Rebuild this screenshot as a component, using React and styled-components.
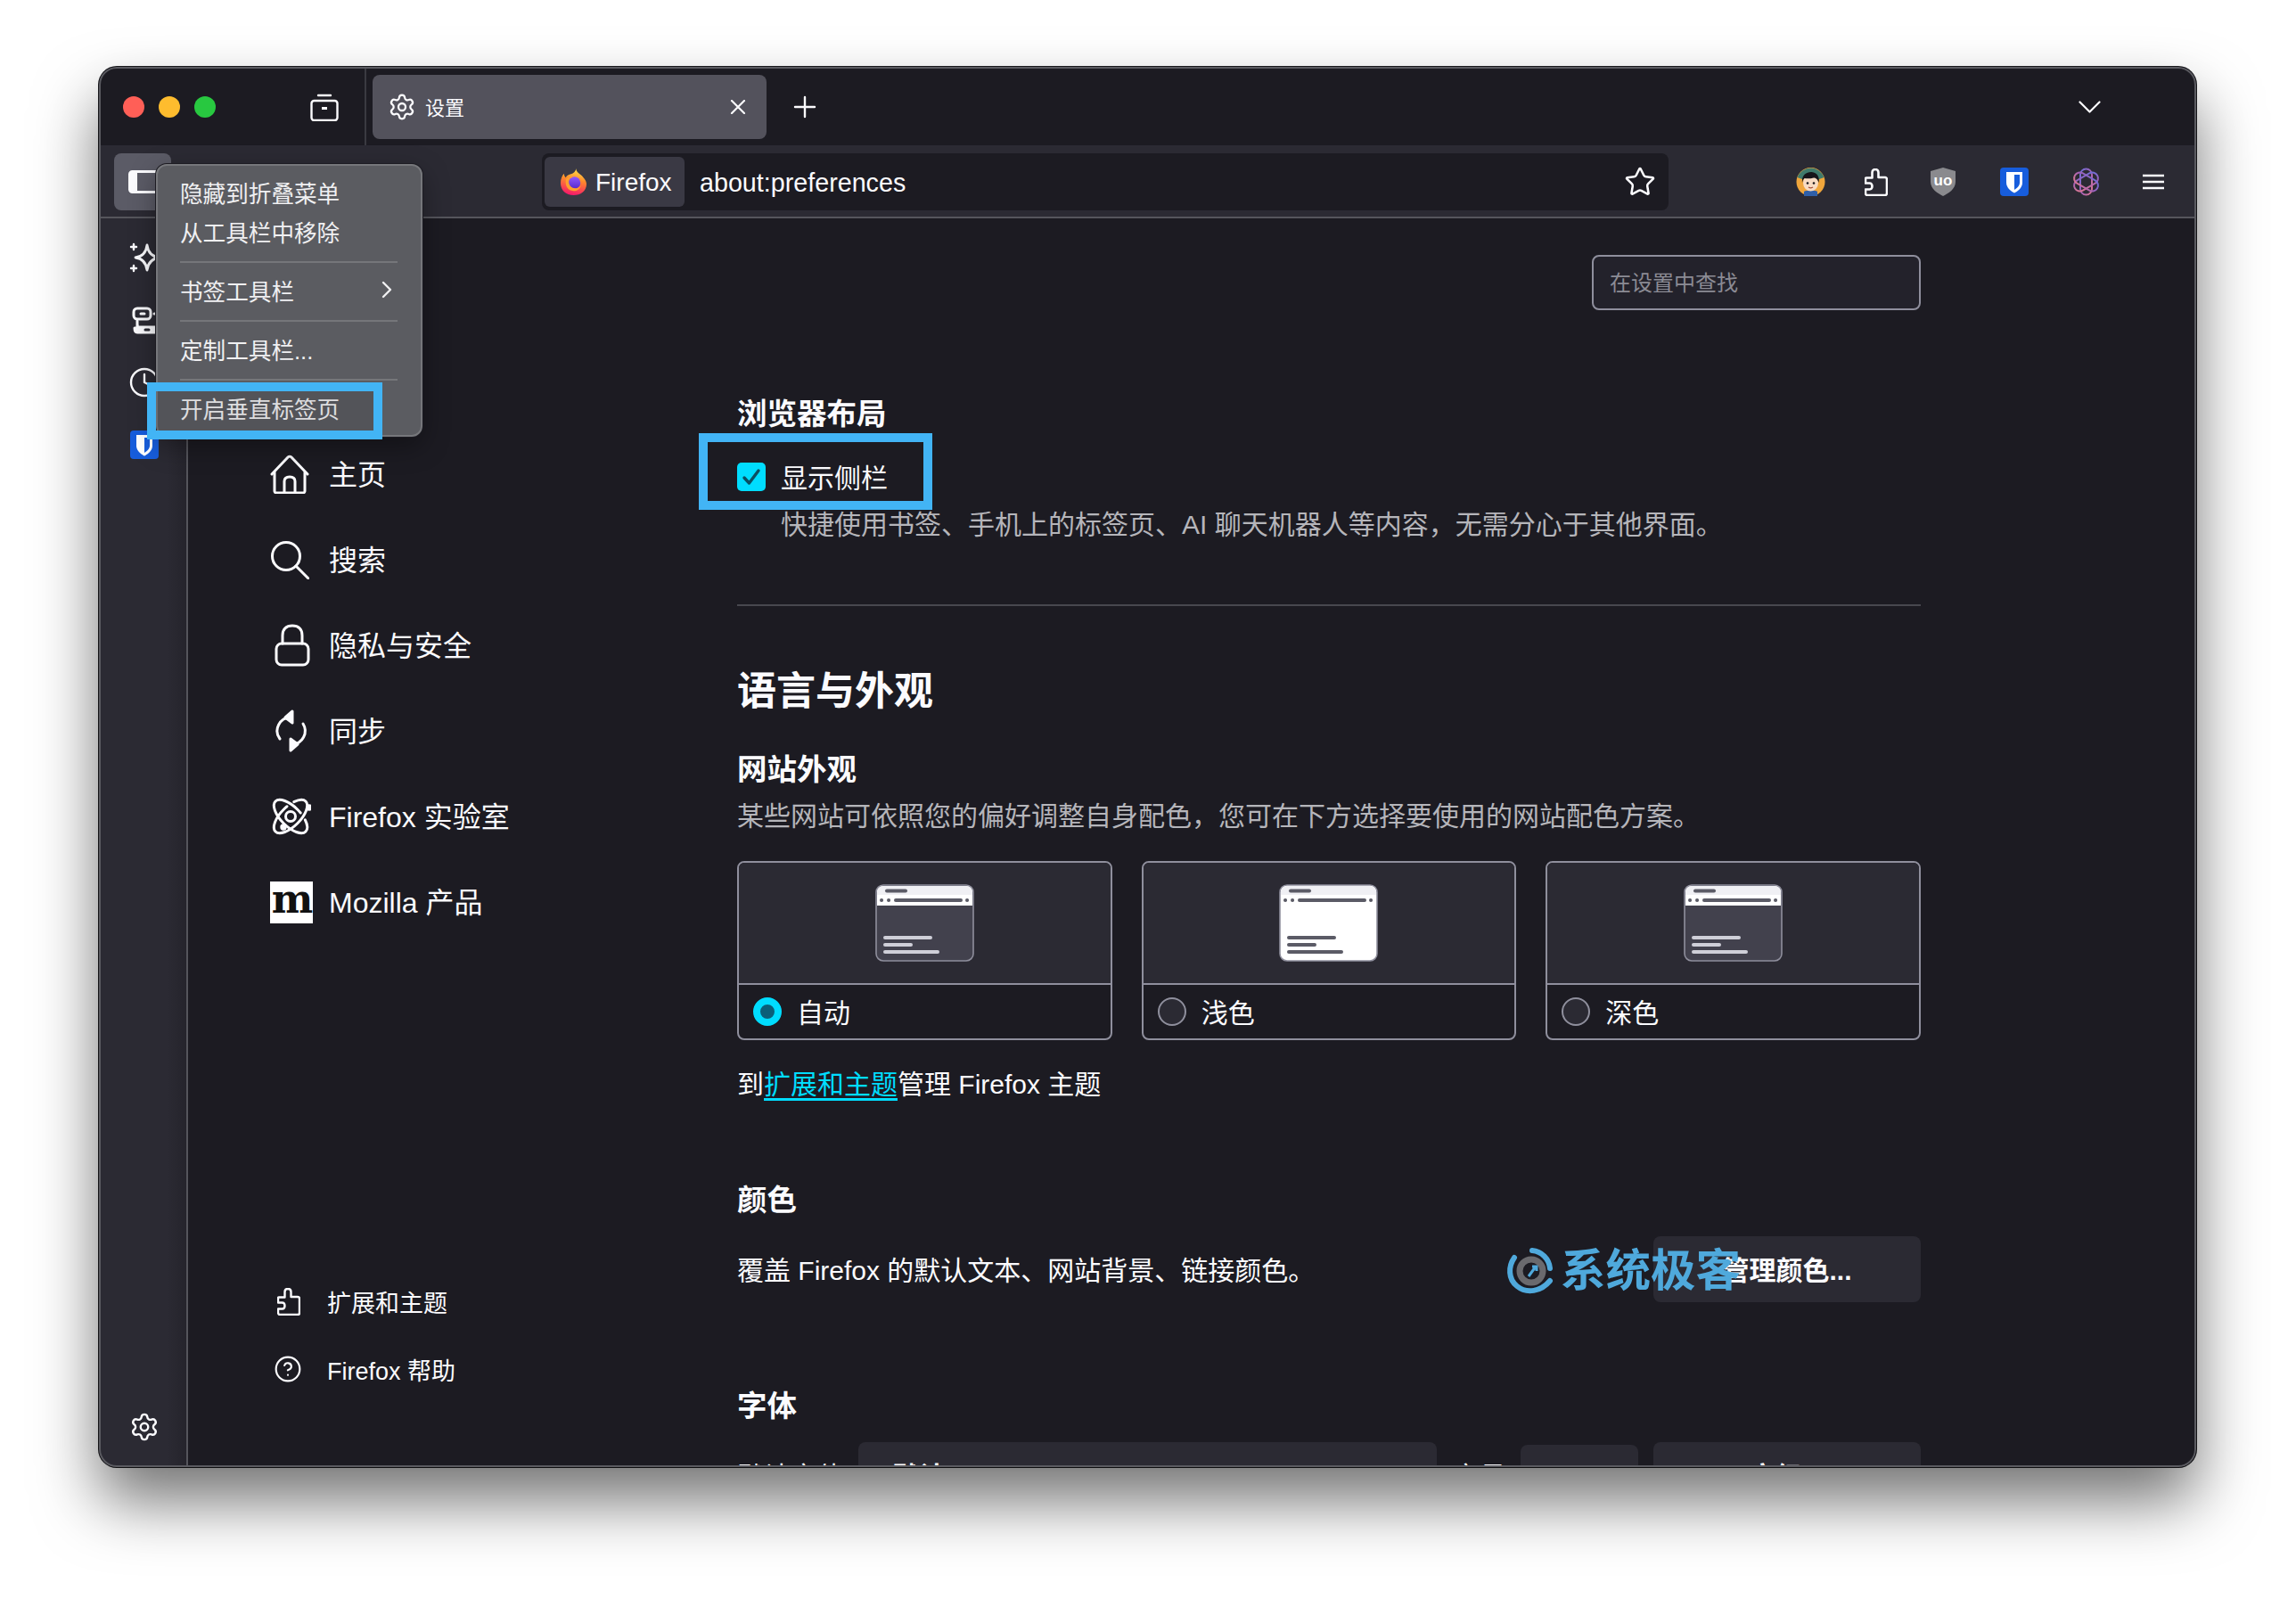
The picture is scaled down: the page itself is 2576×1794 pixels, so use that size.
import React from "react";
import styled, { createGlobalStyle } from "styled-components";
import { Settings, Star, Clock, CircleHelp, ChevronRight } from "lucide-react";

const GlobalStyle = createGlobalStyle`
  * { box-sizing: border-box; }
  html, body { margin: 0; background: #fff; }
  body {
    font-family: "Liberation Sans", "Noto Sans CJK SC", sans-serif;
    color: #fbfbfe;
  }
`;

const Page = styled.div`
  width: 2576px;
  height: 1794px;
  padding: 75px 0 0 111px;
  overflow: hidden;
  background: #fff;
`;

const Window = styled.div`
  position: relative;
  width: 2353px;
  height: 1571px;
  display: flex;
  flex-direction: column;
  overflow: hidden;
  background: #1c1b22;
  border-radius: 20px;
  box-shadow: 0 38px 70px rgba(0, 0, 0, 0.55), 0 0 0 1px #1a1a1e;
  &::after {
    content: "";
    position: absolute;
    inset: 0;
    border-radius: 20px;
    border: 2px solid #5a5a60;
    pointer-events: none;
    z-index: 5;
  }
`;

/* title bar */
const TitleBar = styled.div`
  height: 88px;
  flex: none;
  padding-top: 2px;
  display: flex;
  align-items: center;
  background: #1c1b22;
`;

const TrafficLights = styled.div`
  display: flex;
  gap: 16px;
  padding-left: 27px;
`;

const Dot = styled.span`
  width: 24px;
  height: 24px;
  border-radius: 50%;
  background: ${({ $color }) => $color};
`;

const TabsToggle = styled.svg`
  width: 32px;
  height: 31px;
  margin-left: 106px;
`;

const TabDivider = styled.div`
  align-self: stretch;
  width: 2px;
  margin: -2px 0 0 29px;
  background: #3a3a41;
`;

const Tab = styled.div`
  width: 442px;
  height: 72px;
  margin-left: 7px;
  padding: 0 23px 0 17px;
  display: flex;
  align-items: center;
  gap: 10px;
  border-radius: 8px;
  background: #53525c;
  font-size: 22px;
`;

const TabTitle = styled.span`
  flex: 1;
  padding-top: 3px;
  line-height: 32px;
`;

const NewTab = styled.svg`
  width: 26px;
  height: 26px;
  margin-left: 30px;
`;

const AllTabs = styled.svg`
  width: 25px;
  height: 14px;
  margin-left: auto;
  margin-right: 107px;
`;

/* toolbar */
const Toolbar = styled.div`
  height: 82px;
  flex: none;
  padding-top: 2px;
  display: flex;
  align-items: center;
  background: #2b2a33;
  border-bottom: 2px solid #55555c;
`;

const SidebarToggle = styled.button`
  width: 64px;
  height: 64px;
  margin-left: 17px;
  padding: 0 0 0 16px;
  display: flex;
  align-items: center;
  border: 0;
  border-radius: 8px;
  background: #5b5b66;
`;

const UrlBar = styled.div`
  width: 1264px;
  height: 64px;
  margin-left: 416px;
  padding: 0 14px 0 3px;
  display: flex;
  align-items: center;
  border-radius: 8px;
  background: #1c1b22;
  font-size: 28.7px;
`;

const IdentityChip = styled.div`
  width: 157px;
  height: 56px;
  padding-left: 17px;
  display: flex;
  align-items: center;
  gap: 9px;
  border-radius: 6px;
  background: #3a3944;
  font-size: 28px;
`;

const ChipLabel = styled.span`
  padding-top: 2px;
`;

const UrlText = styled.span`
  flex: 1;
  margin-left: 17px;
  padding-top: 3px;
`;

const ExtSlot = styled.div`
  margin-left: ${({ $ml }) => $ml}px;
  display: flex;
  align-items: center;
`;

/* body */
const Main = styled.div`
  flex: 1;
  min-height: 0;
  display: flex;
`;

const Sidebar = styled.aside`
  width: 100px;
  flex: none;
  padding: 9px 0 28px 3px;
  display: flex;
  flex-direction: column;
  align-items: center;
  background: linear-gradient(to right, #2b2a33 78%, #25242c 100%);
  border-right: 2px solid #55555c;
`;

const SideIcon = styled.div`
  height: 70px;
  width: 40px;
  display: flex;
  align-items: center;
  justify-content: center;
`;

const SideFooter = styled.div`
  margin-top: auto;
  display: flex;
`;

const PrefNav = styled.nav`
  width: 616px;
  flex: none;
  padding: 238px 0 72px 92px;
  display: flex;
  flex-direction: column;
  justify-content: space-between;
`;

const NavGroup = styled.div`
  display: flex;
  flex-direction: column;
`;

const NavItem = styled.div`
  height: 96px;
  padding-bottom: 3px;
  display: flex;
  align-items: center;
  font-size: 32px;
`;

const NavIcon = styled.span`
  width: 66px;
  flex: none;
  display: flex;
  align-items: center;
  padding-top: 5px;
`;

const FooterItem = styled.div`
  height: 76px;
  display: flex;
  align-items: center;
  font-size: 27px;
`;

const FooterIcon = styled.span`
  width: 64px;
  padding-left: ${({ $pad }) => $pad}px;
  flex: none;
  display: flex;
  align-items: center;
`;

const MozillaMark = styled.span`
  width: 48px;
  height: 47px;
  display: flex;
  align-items: center;
  justify-content: center;
  background: #fff;
  color: #111;
  font-family: "DejaVu Serif", serif;
  font-weight: 700;
  font-size: 44px;
  line-height: 47px;
  padding-bottom: 8px;
  letter-spacing: -2px;
`;

const Content = styled.main`
  width: 1328px;
  flex: none;
  display: flex;
  flex-direction: column;
  align-items: stretch;
  & > * {
    flex: none;
  }
`;

const SearchBox = styled.div`
  width: 369px;
  height: 62px;
  margin: 41px 0 0 auto;
  padding: 0 0 3px 18px;
  display: flex;
  align-items: center;
  border: 2px solid #8f8f9d;
  border-radius: 8px;
  background: #23222b;
  color: #8b8b94;
  font-size: 24px;
`;

const Heading = styled.h3`
  margin: ${({ $top }) => $top}px 0 0;
  font-size: 33.5px;
  line-height: 40px;
  font-weight: 700;
`;

const PageHeading = styled.h2`
  margin: 66px 0 0;
  font-size: 44px;
  line-height: 60px;
  font-weight: 700;
`;

const CheckRow = styled.label`
  position: relative;
  width: max-content;
  height: 32px;
  margin-top: 34px;
  display: flex;
  align-items: center;
  gap: 17px;
  font-size: 30px;
`;

const CheckLabel = styled.span`
  padding-bottom: 3px;
`;

const CheckBox = styled.span`
  width: 32px;
  height: 32px;
  display: flex;
  align-items: center;
  justify-content: center;
  border-radius: 5px;
  background: #00ddff;
`;

const Highlight = styled.span`
  position: absolute;
  left: ${({ $left }) => $left}px;
  top: ${({ $top }) => $top}px;
  width: ${({ $w }) => $w}px;
  height: ${({ $h }) => $h}px;
  border: 10px solid #42b4f5;
  background: ${({ $fill }) => $fill || "transparent"};
  pointer-events: none;
`;

const Note = styled.p`
  margin: ${({ $top }) => $top}px 0 0 ${({ $left }) => $left || 0}px;
  font-size: 30px;
  line-height: 40px;
  color: #b5b5ba;
`;

const Rule = styled.hr`
  height: 2px;
  margin: 69px 0 0;
  border: 0;
  background: #48484f;
`;

const CardRow = styled.div`
  margin-top: 30px;
  display: grid;
  grid-template-columns: repeat(3, 1fr);
  column-gap: 33px;
`;

const ThemeCard = styled.div`
  height: 201px;
  display: flex;
  flex-direction: column;
  border: 2px solid #8f8f9d;
  border-radius: 8px;
  overflow: hidden;
`;

const ThemePreview = styled.div`
  height: 137px;
  flex: none;
  padding-top: 24px;
  display: flex;
  justify-content: center;
  background: #2b2a33;
  border-bottom: 2px solid #8f8f9d;
`;

const ThemeLabel = styled.div`
  flex: 1;
  padding-left: 16px;
  display: flex;
  align-items: center;
  gap: 17px;
  font-size: 30px;
`;

const ThemeName = styled.span`
  padding-bottom: 3px;
`;

const Radio = styled.span`
  width: 32px;
  height: 32px;
  border-radius: 50%;
  background: ${({ $on }) => ($on ? "#0b5f78" : "#2b2a33")};
  border: ${({ $on }) => ($on ? "8px solid #00ddff" : "2px solid #8f8f9d")};
`;

const LinkLine = styled.p`
  margin: 30px 0 0;
  font-size: 30px;
  line-height: 40px;
`;

const ThemeLink = styled.a`
  color: #00ddff;
  text-decoration: underline;
  text-underline-offset: 5px;
`;

const ControlRow = styled.div`
  position: relative;
  height: 74px;
  margin-top: ${({ $top }) => $top}px;
  display: flex;
  align-items: center;
  font-size: 30px;
`;

const RowText = styled.span`
  flex: ${({ $grow }) => ($grow ? 1 : "none")};
  margin-left: ${({ $ml }) => $ml || 0}px;
  padding-bottom: 3px;
`;

const PlainButton = styled.div`
  width: 300px;
  height: 74px;
  flex: none;
  margin-left: ${({ $ml }) => $ml || 0}px;
  padding-bottom: 3px;
  display: flex;
  align-items: center;
  justify-content: center;
  border-radius: 8px;
  background: #2b2a33;
  font-weight: 600;
`;

const Dropdown = styled.div`
  width: ${({ $w }) => $w}px;
  height: ${({ $h }) => $h}px;
  flex: none;
  margin-left: ${({ $ml }) => $ml}px;
  padding: 0 0 3px ${({ $pad }) => $pad}px;
  display: flex;
  align-items: center;
  border-radius: 8px;
  background: #2b2a33;
  font-weight: 600;
`;

const Watermark = styled.div`
  position: absolute;
  left: 862px;
  top: 9px;
  display: flex;
  align-items: center;
  gap: 2px;
  color: #4fa9dc;
  font-size: 50.5px;
  font-weight: 700;
  line-height: 60px;
`;

/* popup menu */
const ContextMenu = styled.div`
  position: absolute;
  left: 64px;
  top: 109px;
  width: 299px;
  height: 306px;
  padding: 7px 0 9px;
  display: flex;
  flex-direction: column;
  border: 2px solid #76777b;
  border-radius: 12px;
  background: #5b5c61;
  box-shadow: 0 0 0 1px #1c1b22, 0 10px 30px rgba(0, 0, 0, 0.35);
  color: #f0f0f2;
  font-size: 25.6px;
  z-index: 4;
`;

const MenuItem = styled.div`
  position: relative;
  height: 44px;
  flex: none;
  padding: 0 22px 0 25px;
  display: flex;
  align-items: center;
  justify-content: space-between;
`;

const MenuRule = styled.div`
  height: 2px;
  flex: none;
  margin: 12px 26px 8px 25px;
  background: #75767a;
`;

const Icon = ({ children, w = 32, h = 32, box, ...rest }) => (
  <svg width={w} height={h} viewBox={box || `0 0 ${w} ${h}`} fill="none" stroke="#fbfbfe" strokeLinecap="round" strokeLinejoin="round" {...rest}>
    {children}
  </svg>
);

const PuzzleIcon = ({ w = 26, h = 31, sw = 2.6 }) => (
  <Icon w={w} h={h} box="0 0 26 31" strokeWidth={sw}>
    <path d="M2 10.5H8.5V4.5C8.5 2.5 10 1 12 1C14 1 15.5 2.5 15.5 4.5V10H23C24 10 25 11 25 12V28C25 29 24 30 23 30H3C2 30 1 29 1 28V23.5H5.5C7.5 23.5 8.5 22 8.5 20C8.5 18 7.5 16.5 5.5 16.5H1V11.5C1 11 1.5 10.5 2 10.5Z" />
  </Icon>
);

const BitwardenIcon = () => (
  <svg width="32" height="32" viewBox="0 0 32 32">
    <rect width="32" height="32" rx="4" fill="#175ddc" />
    <path d="M7 5H25V17C25 23 19 27 16 28.5C13 27 7 23 7 17Z" fill="#fff" />
    <path d="M16 8H22V17C22 20.5 18.5 23.5 16 25Z" fill="#175ddc" />
  </svg>
);

const FirefoxLogo = () => (
  <svg width="31" height="33" viewBox="0 0 32 32" style={{ flex: "none" }}>
    <defs>
      <linearGradient id="fxBody" x1="0.6" y1="0" x2="0.4" y2="1">
        <stop offset="0" stopColor="#ffe14d" />
        <stop offset="0.42" stopColor="#ff8a2b" />
        <stop offset="1" stopColor="#f5156c" />
      </linearGradient>
      <linearGradient id="fxGlobe" x1="0.5" y1="0" x2="0.5" y2="1">
        <stop offset="0" stopColor="#9059ff" />
        <stop offset="1" stopColor="#592acb" />
      </linearGradient>
    </defs>
    <path d="M19 0C19 5 24 6 27 10C30 13 31 16 31 18C31 26 24 31 16 31C7 31 1 25 1 17C1 12 3 8 5 6C5 8 6 10 7 10.500C8 8 11 7 13 6.500C15 6 18.500 4 19 0Z" fill="url(#fxBody)" />
    <circle cx="17" cy="16.500" r="7" fill="url(#fxGlobe)" />
    <path d="M7 13C9 10 12 9.500 15 10.500C12 10.500 10.500 12.500 10.500 15C10.500 20 14 23 18 23C21 23 23 21.500 24.500 19.500C23.500 24 20 26 16 26C10 26 6 21 7 13Z" fill="#ffa02e" />
  </svg>
);

const AvatarIcon = () => (
  <svg width="33" height="32" viewBox="0 0 33 32">
    <circle cx="16.5" cy="16" r="16" fill="#f0a63c" />
    <path d="M1.5 11A16 16 0 0 1 31.500 11L26 13H7Z" fill="#3f7a6b" />
    <path d="M9 32V27C11 25 22 25 24 27V32Z" fill="#2f5fa8" />
    <ellipse cx="16.500" cy="17" rx="8.500" ry="9.500" fill="#f8dcc3" />
    <path d="M7 17C6 9 11 5 17 5C23 5 27 10 25.500 17C24.500 13 22 11.500 20 11.500C17 12.500 12 12.500 9.500 12C8 13 7.500 15 7 17Z" fill="#17161a" />
    <circle cx="13" cy="17.500" r="1.300" fill="#17161a" />
    <circle cx="20" cy="17.500" r="1.300" fill="#17161a" />
    <path d="M14 22C15.500 23 17.500 23 19 22" stroke="#a5503c" strokeWidth="1.200" fill="none" />
  </svg>
);

const UblockIcon = () => (
  <svg width="30" height="32" viewBox="0 0 30 32">
    <path d="M15 0L29 4V16C29 24 21 29 15 32C9 29 1 24 1 16V4Z" fill="#8a8a8e" />
    <text x="15" y="20" textAnchor="middle" fontFamily="Liberation Sans" fontWeight="700" fontSize="17" fill="#fff">uo</text>
  </svg>
);

const OpenAiKnot = () => (
  <svg width="33" height="32" viewBox="0 0 33 32" fill="none">
    <defs>
      <linearGradient id="knot" x1="0" y1="0" x2="1" y2="1">
        <stop offset="0" stopColor="#6a6fd8" />
        <stop offset="0.5" stopColor="#a05fb8" />
        <stop offset="1" stopColor="#e07a8f" />
      </linearGradient>
    </defs>
    <g stroke="url(#knot)" strokeWidth="2">
      <rect x="10" y="1.500" width="13" height="29" rx="6.500" />
      <rect x="10" y="1.500" width="13" height="29" rx="6.500" transform="rotate(60 16.500 16)" />
      <rect x="10" y="1.500" width="13" height="29" rx="6.500" transform="rotate(120 16.500 16)" />
    </g>
  </svg>
);

const Hamburger = () => (
  <Icon w={24} h={18} strokeWidth="2.400" strokeLinecap="butt">
    <path d="M0 2H24M0 9H24M0 16H24" />
  </Icon>
);

const SparkleIcon = () => (
  <Icon w={40} h={40} strokeWidth="2.800">
    <path d="M23 6C24 14 29 19 37 20C29 21 24 26 23 34C22 26 17 21 10 20C17 19 22 14 23 6Z" />
    <path d="M8 5V11M5 8H11M8 29V35M5 32H11" strokeWidth="2.400" />
  </Icon>
);

const SyncedTabsIcon = () => (
  <Icon w={40} h={40} strokeWidth="3">
    <rect x="8" y="7" width="19" height="12" rx="4" />
    <path d="M16 13H20M31 13H33" />
    <path d="M12 21V29H9C9 33 10 34 12 34H36V28H14" fill="#fbfbfe" />
    <path d="M21 31H25" stroke="#2b2a33" />
  </Icon>
);

const HomeIcon = () => (
  <Icon w={44} h={44} strokeWidth="3">
    <path d="M2 22L20 3C21 2 23 2 24 3L42 22" />
    <path d="M5 20V41C5 42 6 43 7 43H37C38 43 39 42 39 41V20" />
    <path d="M16 43V30C16 27 18 25 22 25C26 25 28 27 28 30V43" />
  </Icon>
);

const SearchIcon = () => (
  <Icon w={44} h={44} strokeWidth="3">
    <circle cx="18" cy="18" r="15.500" />
    <path d="M29 29L43 43" />
  </Icon>
);

const LockIcon = () => (
  <Icon w={44} h={48} strokeWidth="3" style={{ marginLeft: 5 }}>
    <rect x="2" y="22" width="36" height="24" rx="6" />
    <path d="M9 22V13C9 6 13 2 20 2C27 2 31 6 31 13V22" />
  </Icon>
);

const SyncIcon = () => (
  <Icon w={44} h={48} strokeWidth="3" style={{ marginLeft: 5 }}>
    <path d="M6 33A15 15 0 0 1 18 9" />
    <path d="M32 16A15 15 0 0 1 20 39" />
    <path d="M20 2L12 9L20 15Z" fill="#fbfbfe" />
    <path d="M18 33L26 39L18 46Z" fill="#fbfbfe" />
  </Icon>
);

const AtomIcon = () => (
  <Icon w={46} h={46} strokeWidth="3">
    <ellipse cx="23" cy="23" rx="24" ry="11" transform="rotate(45 23 23)" strokeDasharray="90 9" />
    <ellipse cx="23" cy="23" rx="24" ry="11" transform="rotate(-45 23 23)" strokeDasharray="90 9" />
    <circle cx="23" cy="23" r="5.500" />
    <circle cx="44" cy="13" r="2.200" fill="#fbfbfe" />
    <circle cx="15" cy="35" r="2.200" fill="#fbfbfe" />
  </Icon>
);

const PreviewArt = ({ light }) => {
  const body = light ? "#ffffff" : "#42414d";
  const lines = light ? "#5b5b66" : "#cfcfd8";
  return (
    <svg width="111" height="87" viewBox="0 0 111 87">
      <rect x="1" y="1" width="109" height="85" rx="8" fill={body} stroke="#8f8f9d" strokeWidth="1.600" />
      <path d="M2 24V9C2 5 5 2 9 2H102C106 2 109 5 109 9V24Z" fill="#fff" />
      <path d="M2 12V9C2 5 5 2 9 2H102C106 2 109 5 109 9V12Z" fill="#f0f0f4" />
      <g stroke="#5b5b66" strokeLinecap="round" strokeWidth="4">
        <path d="M13 7.500H34" />
        <path d="M23 18H96" />
        <path d="M7 18H7.100M15 18H15.100M103 18H103.100" />
      </g>
      <g stroke={lines} strokeLinecap="round" strokeWidth="4">
        <path d="M11 60H62" />
        <path d="M11 68H40" />
        <path d="M11 76H70" />
      </g>
    </svg>
  );
};

const WatermarkLogo = () => (
  <svg width="60" height="54" viewBox="0 0 60 54" fill="none">
    <path d="M10 12C3 22 3 36 13 44C24 53 40 50 50 38" stroke="#4fa9dc" strokeWidth="6" strokeLinecap="round" />
    <path d="M30 4A22 22 0 0 1 50 24" stroke="#4fa9dc" strokeWidth="6" strokeLinecap="round" />
    <circle cx="29" cy="27" r="13" stroke="#6a6a6e" strokeWidth="7" />
    <path d="M26 33L34 22M30 22H35V27" stroke="#4fa9dc" strokeWidth="3" />
  </svg>
);

const themes = [
  { name: "自动", on: true, light: false },
  { name: "浅色", on: false, light: true },
  { name: "深色", on: false, light: false },
];

const navItems = [
  { label: "主页", icon: <HomeIcon /> },
  { label: "搜索", icon: <SearchIcon /> },
  { label: "隐私与安全", icon: <LockIcon /> },
  { label: "同步", icon: <SyncIcon /> },
  { label: "Firefox 实验室", icon: <AtomIcon /> },
  { label: "Mozilla 产品", icon: <MozillaMark>m</MozillaMark> },
];

export default function App() {
  return (
    <>
      <GlobalStyle />
      <Page>
        <Window>
          <TitleBar>
            <TrafficLights>
              <Dot $color="#ff5f57" />
              <Dot $color="#febc2e" />
              <Dot $color="#28c840" />
            </TrafficLights>
            <TabsToggle viewBox="0 0 32 31" fill="none" stroke="#fbfbfe" strokeWidth="2.400" strokeLinecap="round">
              <path d="M9 2H23" />
              <rect x="1.500" y="8" width="29" height="22" rx="3" />
              <path d="M13 16.500H19" strokeWidth="3" strokeLinecap="butt" />
            </TabsToggle>
            <TabDivider />
            <Tab>
              <Settings size={32} strokeWidth={1.7} color="#fbfbfe" />
              <TabTitle>设置</TabTitle>
              <svg width="18" height="16" viewBox="0 0 18 16" stroke="#fbfbfe" strokeWidth="2.200" strokeLinecap="round">
                <path d="M2 1L16 15M16 1L2 15" />
              </svg>
            </Tab>
            <NewTab viewBox="0 0 26 26" stroke="#fbfbfe" strokeWidth="2.400" strokeLinecap="round">
              <path d="M13 2V24M2 13H24" />
            </NewTab>
            <AllTabs viewBox="0 0 25 14" fill="none" stroke="#fbfbfe" strokeWidth="2.200" strokeLinecap="round" strokeLinejoin="round">
              <path d="M1.500 1.500L12.500 12.500L23.500 1.500" />
            </AllTabs>
          </TitleBar>

          <Toolbar>
            <SidebarToggle>
              <svg width="32" height="26" viewBox="0 0 32 26">
                <rect x="1.500" y="1.500" width="32" height="23" rx="3" fill="none" stroke="#fbfbfe" strokeWidth="3" />
                <rect x="2" y="2" width="8" height="22" fill="#fbfbfe" />
              </svg>
            </SidebarToggle>
            <UrlBar>
              <IdentityChip>
                <FirefoxLogo />
                <ChipLabel>Firefox</ChipLabel>
              </IdentityChip>
              <UrlText>about:preferences</UrlText>
              <Star size={36} strokeWidth={1.7} color="#fbfbfe" />
            </UrlBar>
            <ExtSlot $ml={143}><AvatarIcon /></ExtSlot>
            <ExtSlot $ml={44}><PuzzleIcon /></ExtSlot>
            <ExtSlot $ml={47}><UblockIcon /></ExtSlot>
            <ExtSlot $ml={49}><BitwardenIcon /></ExtSlot>
            <ExtSlot $ml={48}><OpenAiKnot /></ExtSlot>
            <ExtSlot $ml={47}><Hamburger /></ExtSlot>
          </Toolbar>

          <Main>
            <Sidebar>
              <SideIcon><SparkleIcon /></SideIcon>
              <SideIcon><SyncedTabsIcon /></SideIcon>
              <SideIcon><Clock size={36} strokeWidth={1.6} color="#fbfbfe" /></SideIcon>
              <SideIcon><BitwardenIcon /></SideIcon>
              <SideFooter>
                <Settings size={34} strokeWidth={1.7} color="#fbfbfe" />
              </SideFooter>
            </Sidebar>

            <PrefNav>
              <NavGroup>
                {navItems.map((item) => (
                  <NavItem key={item.label}>
                    <NavIcon>{item.icon}</NavIcon>
                    {item.label}
                  </NavItem>
                ))}
              </NavGroup>
              <NavGroup>
                <FooterItem>
                  <FooterIcon $pad={8}><PuzzleIcon sw={2.4} /></FooterIcon>
                  扩展和主题
                </FooterItem>
                <FooterItem>
                  <FooterIcon $pad={4}><CircleHelp size={32} strokeWidth={1.6} color="#fbfbfe" /></FooterIcon>
                  Firefox 帮助
                </FooterItem>
              </NavGroup>
            </PrefNav>

            <Content>
              <SearchBox>在设置中查找</SearchBox>
              <Heading $top={97}>浏览器布局</Heading>
              <CheckRow>
                <CheckBox>
                  <svg width="22" height="20" viewBox="0 0 22 20" fill="none" stroke="#0b4f62" strokeWidth="3.400" strokeLinecap="round" strokeLinejoin="round">
                    <path d="M3 11L8.500 17L19 3" />
                  </svg>
                </CheckBox>
                <CheckLabel>显示侧栏</CheckLabel>
                <Highlight $left={-43} $top={-33} $w={262} $h={86} />
              </CheckRow>
              <Note $top={18} $left={49}>快捷使用书签、手机上的标签页、AI 聊天机器人等内容，无需分心于其他界面。</Note>
              <Rule />
              <PageHeading>语言与外观</PageHeading>
              <Heading $top={38}>网站外观</Heading>
              <Note $top={12}>某些网站可依照您的偏好调整自身配色，您可在下方选择要使用的网站配色方案。</Note>
              <CardRow>
                {themes.map((t) => (
                  <ThemeCard key={t.name}>
                    <ThemePreview>
                      <PreviewArt light={t.light} />
                    </ThemePreview>
                    <ThemeLabel>
                      <Radio $on={t.on} />
                      <ThemeName>{t.name}</ThemeName>
                    </ThemeLabel>
                  </ThemeCard>
                ))}
              </CardRow>
              <LinkLine>到<ThemeLink>扩展和主题</ThemeLink>管理 Firefox 主题</LinkLine>
              <Heading $top={90}>颜色</Heading>
              <ControlRow $top={20}>
                <RowText $grow>覆盖 Firefox 的默认文本、网站背景、链接颜色。</RowText>
                <PlainButton>管理颜色...</PlainButton>
                <Watermark>
                  <WatermarkLogo />
                  系统极客
                </Watermark>
              </ControlRow>
              <Heading $top={97}>字体</Heading>
              <ControlRow $top={20}>
                <RowText>默认字体</RowText>
                <Dropdown $w={649} $h={74} $ml={16} $pad={38}>默认 (Arial)</Dropdown>
                <RowText $ml={18}>字号</RowText>
                <Dropdown $w={132} $h={68} $ml={16} $pad={24}>16</Dropdown>
                <PlainButton $ml={17}>高级...</PlainButton>
              </ControlRow>
            </Content>
          </Main>

          <ContextMenu>
            <MenuItem>隐藏到折叠菜单</MenuItem>
            <MenuItem>从工具栏中移除</MenuItem>
            <MenuRule />
            <MenuItem>
              书签工具栏
              <ChevronRight size={32} strokeWidth={1.8} color="#f0f0f2" />
            </MenuItem>
            <MenuRule />
            <MenuItem>定制工具栏...</MenuItem>
            <MenuRule />
            <MenuItem>
              开启垂直标签页
              <Highlight $left={-12} $top={-6} $w={264} $h={64} $fill="rgba(0,0,0,0.08)" />
            </MenuItem>
          </ContextMenu>
        </Window>
      </Page>
    </>
  );
}
